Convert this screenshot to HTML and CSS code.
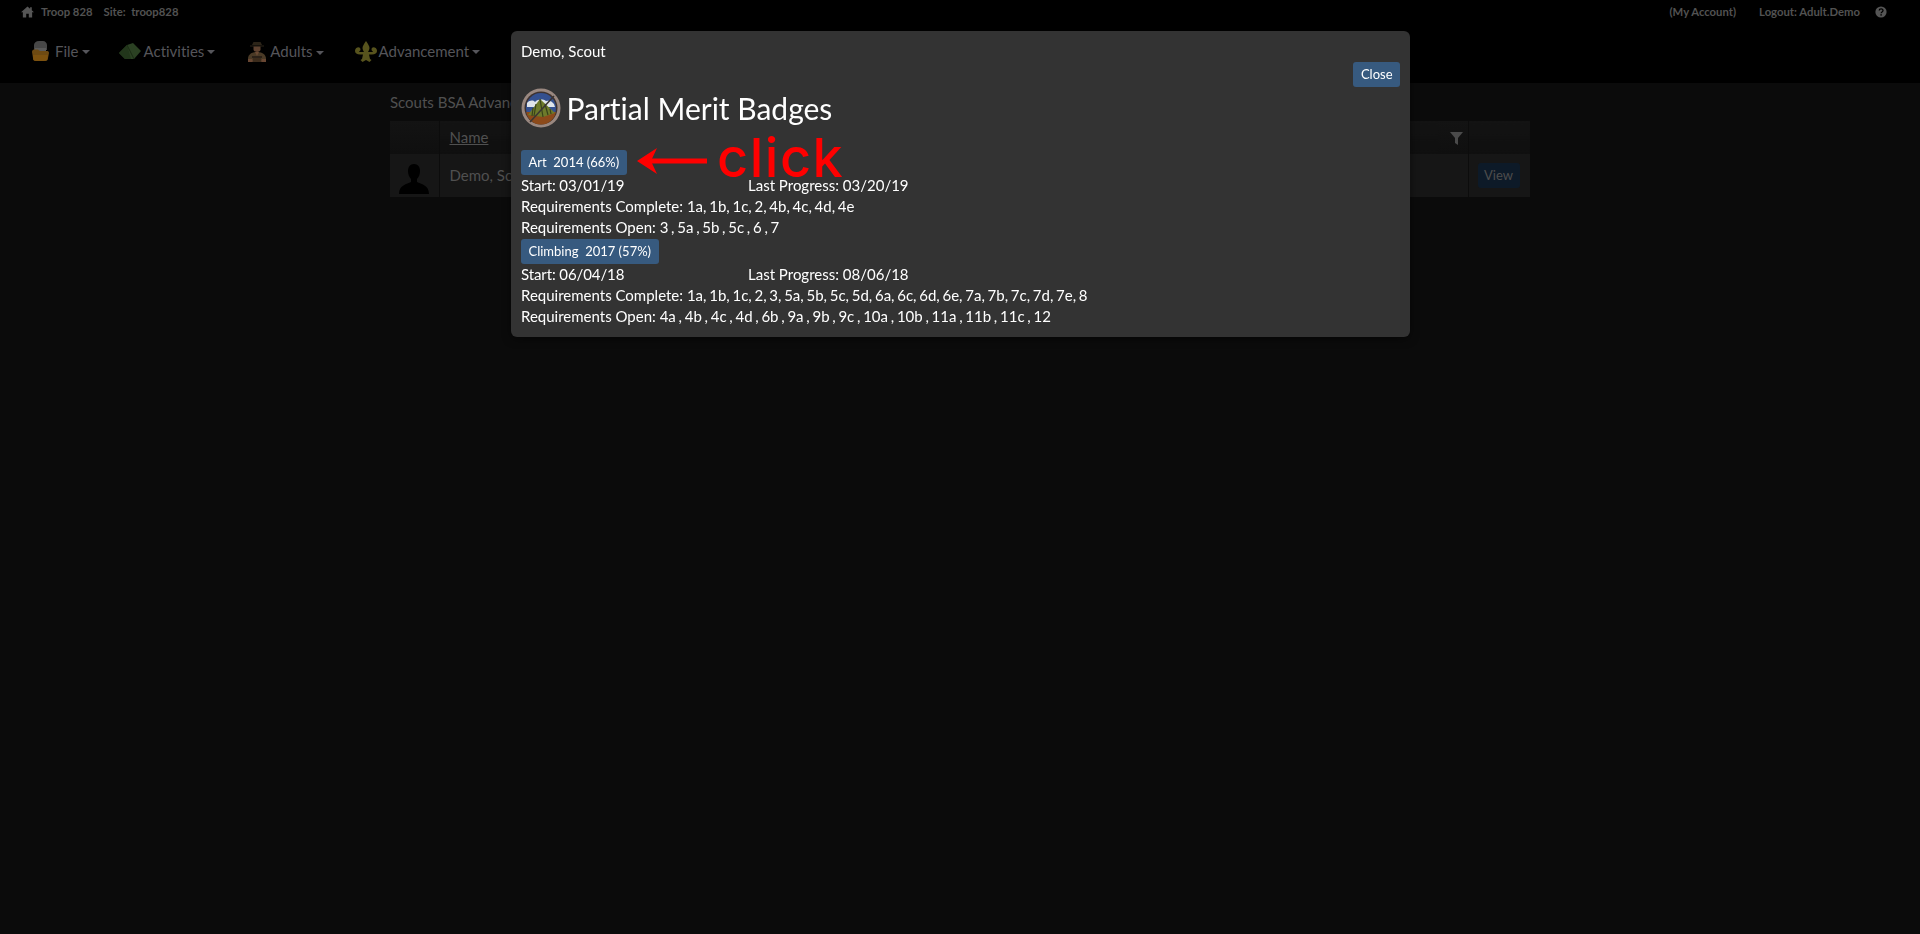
FILE: index.html
```html
<!DOCTYPE html>
<html lang="en">
<head>
<meta charset="utf-8">
<title>Partial Merit Badges</title>
<link rel="stylesheet" href="styles.css">
</head>
<body>
<header class="site-header">
  <div class="topbar">
    <div class="topbar-left">
      <svg class="home-icon" viewBox="0 0 14 12"><path d="M7 0 0 6.400h2V12h3.600V8h2.800v4H12V6.400h2l-2.400-2.200V1h-1.800v1.600z"/></svg>
      <span>Troop 828</span>
      <span class="site-name">Site:&nbsp; troop828</span>
    </div>
    <div class="topbar-right">
      <span>(My Account)</span>
      <span class="logout">Logout: Adult.Demo</span>
      <svg class="help-icon" viewBox="0 0 12 12"><circle cx="6" cy="6" r="5.600" fill="#555"/><path d="M4.200 4.600c0-2.300 3.800-2.300 3.800-.1 0 1.500-1.900 1.400-1.900 2.800" fill="none" stroke="#000" stroke-width="1.300"/><rect x="5.400" y="8.200" width="1.400" height="1.400" fill="#000"/></svg>
    </div>
  </div>
  <nav class="mainnav">
    <a class="nav-item nav-file">
      <svg class="nav-icon" viewBox="0 0 17 20"><path d="M2 9V4c0-2 2-4 5-4h4c2 0 4 2 4 4v5z" fill="#474747"/><path d="M3 7h11v3H3z" fill="#5a5a5a"/><path d="M0 11c0-1.500 1-2.500 2-2.500h4c1 1.500 2 1.500 3 1.500h6c1 0 2 .5 2 2l-1 5c0 2-1 3-3 3H4c-2 0-3-1-3-3z" fill="#6e4a12"/><path d="M1 14h15l-.5 3c0 2-1 3-3 3H4c-2 0-3-1-3-3z" fill="#7d520f"/></svg>
      <span>File</span><i class="caret"></i>
    </a>
    <a class="nav-item nav-activities">
      <svg class="nav-icon tent" viewBox="0 0 22 16"><path d="M0 10 8 2l6-2 8 8-7 8H6z" fill="#2b4123"/><path d="M0 10 8 2l4 14H6z" fill="#22361b"/><path d="M8 2l7 14" stroke="#1b2b15" fill="none"/></svg>
      <span>Activities</span><i class="caret"></i>
    </a>
    <a class="nav-item nav-adults">
      <svg class="nav-icon scout" viewBox="0 0 20 22"><path d="M5 4h10l-1.500-3h-7z" fill="#2c2418"/><path d="M3 4.500h14v1H3z" fill="#2c2418"/><path d="M6.500 5.500h7v3c0 1.500-1.500 2.500-3.500 2.500s-3.500-1-3.500-2.500z" fill="#5e4230"/><path d="M1 18c0-4 3-7 9-7s9 3 9 7v2H1z" fill="#4a3a26"/><path d="M8 11h4l-2 4z" fill="#6a4a34"/><path d="M5 15h10v2H5z" fill="#2b2118"/><path d="M1 18h4l1 3H1zM15 18h4v3h-5z" fill="#684632"/><path d="M6 17h8v4H6z" fill="#3c2c1c"/></svg>
      <span>Adults</span><i class="caret"></i>
    </a>
    <a class="nav-item nav-advancement">
      <svg class="nav-icon fleur" viewBox="0 0 22 21"><path d="M11 0c2 3 3.500 5 3.500 7 0 1.500-1 3-1.500 4h5c0-1-1.500-1-1.500-2.500C16.500 7 18 6 19.500 6.500 21.500 7 22 9 22 10c0 2-2 3.500-5 3.500h-3l1 4.500 1.500 1-2 2L11 19l-3.500 2-2-2 1.500-1 1-4.500H5c-3 0-5-1.500-5-3.500 0-1 .5-3 2.500-3.500C4 6 5.500 7 5.500 8.500 5.500 10 4 10 4 11h5c-.5-1-1.500-2.500-1.500-4C7.500 5 9 3 11 0z" fill="#57531d"/></svg>
      <span>Advancement</span><i class="caret"></i>
    </a>
  </nav>
</header>

<main class="content">
  <div class="page-caption">Scouts BSA Advancement</div>
  <table class="scout-table">
    <thead>
      <tr>
        <th class="col-photo"></th>
        <th class="col-name"><u>Name</u></th>
        <th class="col-filter">
          <svg class="filter-icon" viewBox="0 0 13 13"><path d="M0 0h13L8 6v7L5 11V6z"/></svg>
        </th>
        <th class="col-action"></th>
      </tr>
    </thead>
    <tbody>
      <tr>
        <td class="col-photo">
          <svg class="avatar" viewBox="0 0 30 30"><path d="M15 0c4 0 6 3 6 7 0 3-1 6-3 8v3c4 2 12 3 12 12H0c0-9 8-10 12-12v-3c-2-2-3-5-3-8 0-4 2-7 6-7z"/></svg>
        </td>
        <td class="col-name">Demo, Scout</td>
        <td class="col-filter"></td>
        <td class="col-action"><span class="view-btn">View</span></td>
      </tr>
    </tbody>
  </table>
</main>

<section class="modal">
  <div class="modal-name">Demo, Scout</div>
  <div class="modal-actions"><button class="btn">Close</button></div>
  <div class="modal-title">
    <svg class="badge-icon" viewBox="0 0 40 40">
      <circle cx="20" cy="20" r="19.500" fill="#9a8880"/>
      <circle cx="20" cy="20" r="16.500" fill="#3d3230"/>
      <circle cx="20" cy="20" r="15" fill="#34508f"/>
      <path d="M5.200 24h29.600A15 15 0 0 1 5.200 24z" fill="#8c4a1a"/>
      <path d="M6 15c3-3 6-3 8-1 3-3 8-3 11-1 3-1 6 0 8 3l1 3H6z" fill="#dfe4ea"/>
      <path d="M7 27 19 11l15 14-12 4z" fill="#6d7a2b"/>
      <path d="M19 11l3 18M15 16l-2 12M12 20l-1 8M24 16l3 11M29 21l1 5" stroke="#39421a" stroke-width="1.200" fill="none"/>
      <path d="M9 34 33 8" stroke="#3a3533" stroke-width="1.500"/>
    </svg>
    <h1>Partial Merit Badges</h1>
  </div>

  <div class="badge-list">
    <div class="badge-block">
      <button class="btn btn-badge">Art &nbsp;2014 (66%)</button>
      <div class="dates"><span class="date-start">Start: 03/01/19</span><span>Last Progress: 03/20/19</span></div>
      <div>Requirements Complete: <span class="req-values">1a, 1b, 1c, 2, 4b, 4c, 4d, 4e</span></div>
      <div>Requirements Open: <span class="req-values">3 , 5a , 5b , 5c , 6 , 7</span></div>
    </div>
    <div class="badge-block">
      <button class="btn btn-badge">Climbing &nbsp;2017 (57%)</button>
      <div class="dates"><span class="date-start">Start: 06/04/18</span><span>Last Progress: 08/06/18</span></div>
      <div>Requirements Complete: <span class="req-values">1a, 1b, 1c, 2, 3, 5a, 5b, 5c, 5d, 6a, 6c, 6d, 6e, 7a, 7b, 7c, 7d, 7e, 8</span></div>
      <div>Requirements Open: <span class="req-values">4a , 4b , 4c , 4d , 6b , 9a , 9b , 9c , 10a , 10b , 11a , 11b , 11c , 12</span></div>
    </div>
  </div>

  <div class="callout">
    <svg class="callout-arrow" viewBox="0 0 70 26"><path d="M70 13H14" stroke="#f00" stroke-width="5" fill="none"/><path d="M0 13 20 0l-6 13 6 13z" fill="#f00"/></svg>
    <span class="callout-text">click</span>
  </div>
</section>
</body>
</html>
```
FILE: styles.css
```css
* { box-sizing: border-box; }
html, body { height: 100%; }
body {
  margin: 0;
  background: #0b0b0b;
  color: #555;
  font-family: Lato, "Open Sans", sans-serif;
  font-size: 15px;
  line-height: 1.42857;
  font-variant-ligatures: none;
  overflow: hidden;
}
.site-header { background: #000; height: 83px; }
.topbar {
  height: 24px;
  display: flex;
  justify-content: space-between;
  align-items: center;
  padding: 0 33px 0 21px;
  font-size: 11.300px;
  font-weight: 700;
  color: #525252;
}
.topbar-left, .topbar-right { display: flex; align-items: center; }
.home-icon { width: 13px; height: 12px; fill: #555; margin-right: 7px; }
.site-name { margin-left: 11px; }
.logout { margin-left: 23px; }
.help-icon { width: 12px; height: 12px; margin-left: 15px; }
.mainnav {
  height: 59px;
  display: flex;
  align-items: center;
  padding: 0 0 4px 32px;
  color: #55555a;
}
.nav-item { display: flex; align-items: center; }
.nav-activities { margin-left: 29px; }
.nav-adults { margin-left: 32px; }
.nav-advancement { margin-left: 31px; }
.nav-icon { width: 17px; height: 20px; margin-right: 6px; }
.nav-icon.tent { width: 22px; height: 16px; margin-right: 3px; }
.nav-icon.scout { width: 20px; height: 22px; margin-right: 3px; }
.nav-icon.fleur { width: 22px; height: 21px; margin-right: 2px; }
.caret {
  display: inline-block;
  margin-left: 3px;
  margin-top: 2px;
  border-top: 4px solid #55555a;
  border-left: 4px solid transparent;
  border-right: 4px solid transparent;
}
.content { width: 1140px; margin-left: 390px; padding-top: 8px; }
.page-caption { line-height: 22px; color: #505050; margin-bottom: 8px; }
.scout-table {
  width: 100%;
  table-layout: fixed;
  border-collapse: collapse;
  color: #505050;
}
.scout-table th {
  height: 33px;
  font-weight: 400;
  text-align: left;
  background: linear-gradient(#131313, #0f0f0f);
}
.scout-table td { height: 43px; background: #161616; }
.scout-table th, .scout-table td { padding: 0; border-right: 1px solid #0c0c0c; }
.col-photo { width: 49px; }
.col-name { padding-left: 10px !important; }
.col-filter { width: 30px; }
.col-action { width: 62px; }
.scout-table tr > :last-child { border-right: 0; }
.scout-table tr > .col-filter { text-align: center; }
.scout-table tr > .col-name { border-right: 0; }
.filter-icon { display: block; width: 13px; height: 13px; fill: #4a4a4a; margin: 2px 0 0 12px; }
.avatar { display: block; width: 30px; height: 30px; fill: #000; margin: 6px 0 0 9px; }
.view-btn {
  display: block;
  width: 42px;
  height: 25px;
  margin-left: 9px;
  background: #0d1a28;
  color: #4d4d4d;
  font-size: 13px;
  line-height: 25px;
  text-align: center;
  border-radius: 3px;
}
.modal {
  position: fixed;
  top: 31px;
  left: 511px;
  width: 899px;
  height: 306px;
  padding: 10px;
  background: #333;
  border-radius: 6px;
  color: #fff;
  box-shadow: 0 2px 8px rgba(0, 0, 0, .5);
}
.modal-actions { display: flex; justify-content: flex-end; height: 25px; margin-top: -0.500px; }
.btn {
  display: block;
  height: 25px;
  padding: 0 7.500px;
  border: 0;
  border-radius: 3px;
  background: #375a7f;
  color: #fff;
  font: 400 13px/25px Lato, "Open Sans", sans-serif;
  font-variant-ligatures: none;
}
.modal-title { display: flex; align-items: center; height: 40px; margin-top: 1px; }
.badge-icon { width: 40px; height: 40px; margin-right: 5.500px; }
.modal-title h1 { margin: 0; font-size: 30px; font-weight: 400; line-height: 40px; }
.badge-list { margin-top: 22px; line-height: 21.200px; }
.dates { display: flex; }
.date-start { width: 227px; letter-spacing: -0.100px; }
.req-values { word-spacing: -1.100px; }
.callout {
  position: absolute;
  top: 110px;
  left: 126px;
  display: flex;
  align-items: center;
  color: #f00;
}
.callout-arrow { width: 70px; height: 26px; margin-top: 6px; }
.callout-text {
  margin-left: 10px;
  font-family: Inter, Lato, sans-serif;
  font-size: 54px;
  line-height: 34px;
  font-weight: 500;
  letter-spacing: 1.500px;
}
```
